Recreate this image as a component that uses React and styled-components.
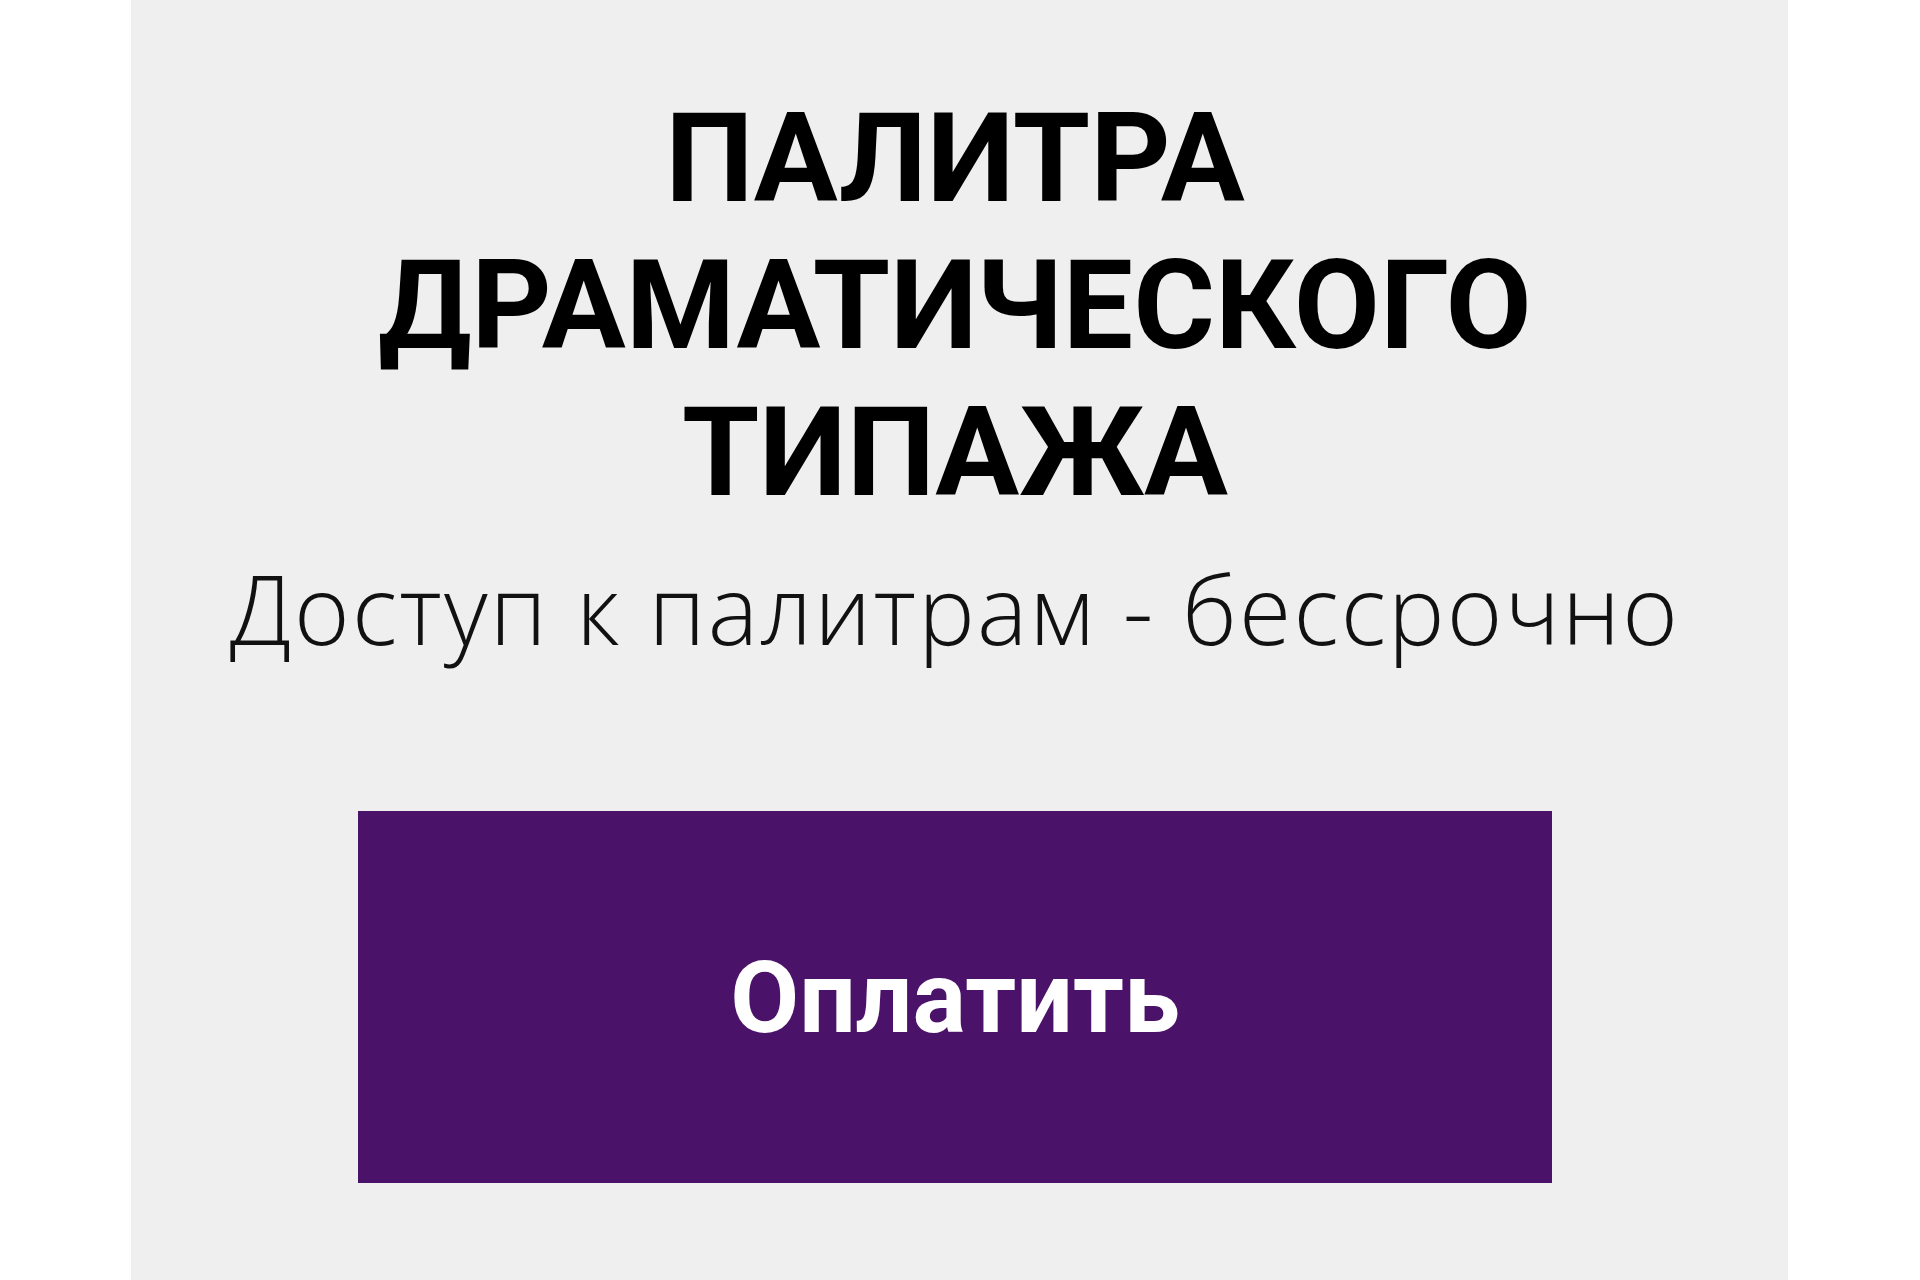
import React from 'react';
import styled, { createGlobalStyle } from 'styled-components';

const GlobalStyle = createGlobalStyle`
  html, body {
    margin: 0;
    padding: 0;
    background: #ffffff;
  }
  body {
    font-family: 'Open Sans', 'Liberation Sans', sans-serif;
  }
`;

const Page = styled.div`
  display: flex;
  justify-content: flex-start;
  min-height: 1280px;
  padding-left: 131px;
`;

const Card = styled.section`
  width: 1657px;
  min-height: 1280px;
  background: #efefef;
  display: flex;
  flex-direction: column;
  align-items: center;
  padding: 85px 9px 0 0;
  box-sizing: border-box;
`;

const Title = styled.h1`
  margin: 0;
  font-family: Roboto, 'Liberation Sans', sans-serif;
  font-weight: 700;
  font-size: 125px;
  line-height: 147px;
  color: #000000;
  text-align: center;
  text-transform: uppercase;
`;

const Subtitle = styled.p`
  margin: 20px 0 0;
  font-family: 'Open Sans', 'Liberation Sans', sans-serif;
  font-weight: 300;
  font-size: 95px;
  letter-spacing: 2.2px;
  line-height: 125px;
  color: #111111;
  text-align: center;
`;

const PayButton = styled.button`
  margin-top: 140px;
  width: 1194px;
  height: 372px;
  border: none;
  background: #4a1268;
  color: #ffffff;
  font-family: Roboto, 'Liberation Sans', sans-serif;
  font-weight: 700;
  font-size: 100px;
  cursor: pointer;
  display: flex;
  align-items: center;
  justify-content: center;
`;

const App = () => {
  return (
    <>
      <GlobalStyle />
      <Page>
        <Card>
          <Title>
            Палитра
            <br />
            драматического
            <br />
            типажа
          </Title>
          <Subtitle>Доступ к палитрам - бессрочно</Subtitle>
          <PayButton>Оплатить</PayButton>
        </Card>
      </Page>
    </>
  );
};

export default App;
